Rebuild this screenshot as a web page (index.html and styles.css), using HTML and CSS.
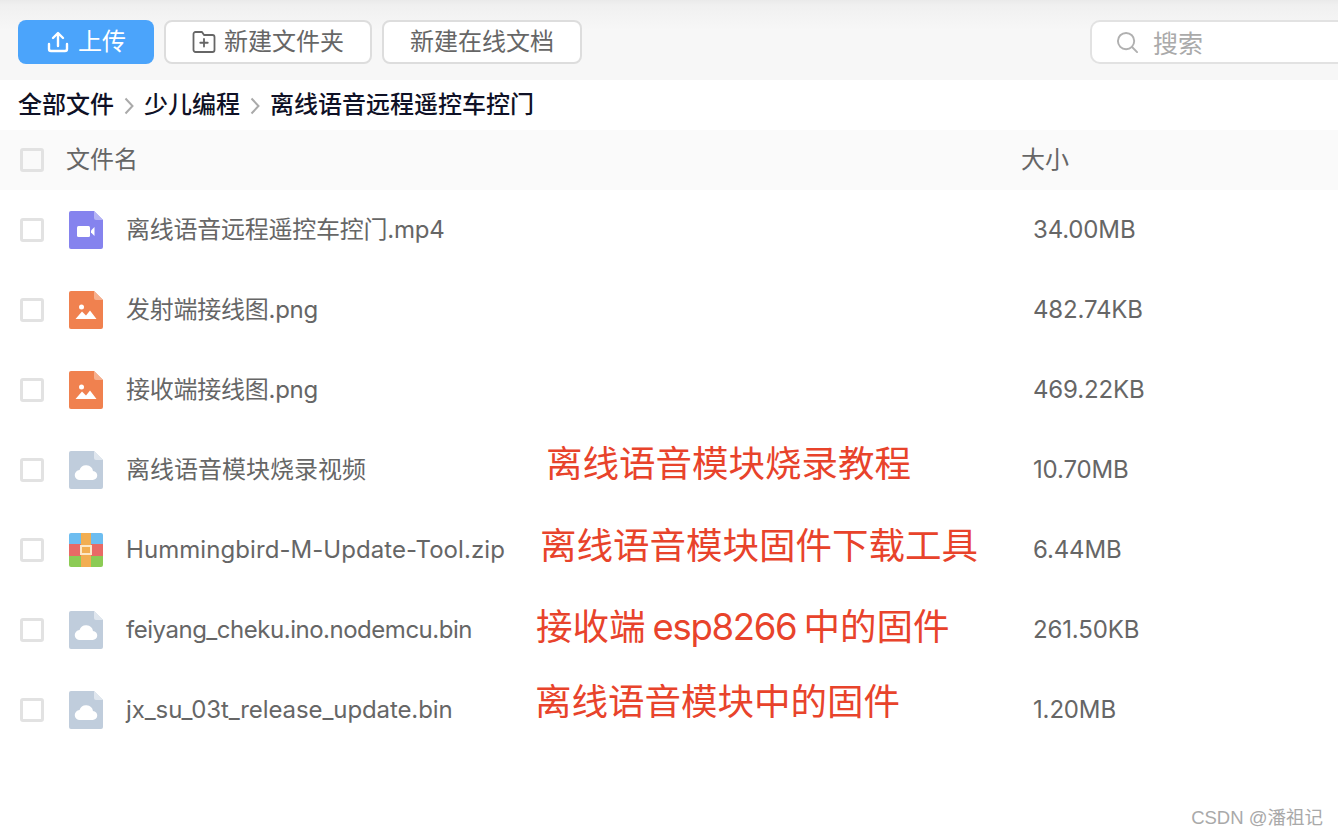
FILE: index.html
```html
<!DOCTYPE html>
<html lang="zh-CN">
<head>
    <meta charset="UTF-8">
    <title>离线语音远程遥控车控门</title>
    <link rel="stylesheet" href="styles.css">
</head>
<body>
    <svg class="sprites" width="0" height="0">
        <symbol id="page-video" viewBox="0 0 34 38">
            <path d="M2 0H25L34 9V36a2 2 0 0 1-2 2H2a2 2 0 0 1-2-2V2a2 2 0 0 1 2-2z" fill="#8583ee"/>
            <path d="M25 0L34 9H27a2 2 0 0 1-2-2z" fill="#b5b4f5"/>
            <rect x="8" y="15" width="13" height="11" rx="1.5" fill="#fff"/>
            <path d="M22 19.500L25.500 16V25L22 21.500z" fill="#fff"/>
        </symbol>
        <symbol id="page-image" viewBox="0 0 34 38">
            <path d="M2 0H25L34 9V36a2 2 0 0 1-2 2H2a2 2 0 0 1-2-2V2a2 2 0 0 1 2-2z" fill="#f0814f"/>
            <path d="M25 0L34 9H27a2 2 0 0 1-2-2z" fill="#f6b08f"/>
            <circle cx="12.500" cy="16" r="2.500" fill="#fff"/>
            <path d="M6.500 28L13 20.500L17 24.500L21 19.500L27.500 28z" fill="#fff"/>
        </symbol>
        <symbol id="page-cloud" viewBox="0 0 34 38">
            <path d="M2 0H25L34 9V36a2 2 0 0 1-2 2H2a2 2 0 0 1-2-2V2a2 2 0 0 1 2-2z" fill="#c0cddc"/>
            <path d="M25 0L34 9H27a2 2 0 0 1-2-2z" fill="#dfe6ee"/>
            <path d="M11 29a5 5 0 0 1-.5-10 7 7 0 0 1 13.500 1 4.500 4.500 0 0 1-.5 9z" fill="#fff"/>
        </symbol>
        <symbol id="zip-box" viewBox="0 0 34 34">
            <path d="M2 0H32a2 2 0 0 1 2 2V11H0V2a2 2 0 0 1 2-2z" fill="#6dbdf0"/>
            <rect y="11" width="34" height="12" fill="#e86a66"/>
            <path d="M0 23H34V32a2 2 0 0 1-2 2H2a2 2 0 0 1-2-2z" fill="#8ccb55"/>
            <rect x="12" width="10" height="34" fill="#f2ae52"/>
            <rect x="12" y="13" width="10" height="8" fill="#f2ae52" stroke="#fbe8c8" stroke-width="2"/>
        </symbol>
    </svg>

    <div class="toolbar">
        <button class="btn btn-primary">
            <svg class="btn-icon" viewBox="0 0 24 24" fill="none" stroke="#fff" stroke-width="2.400" stroke-linecap="round" stroke-linejoin="round">
                <path d="M12 16V3.500M7 8l5-5 5 5M3 14v5a2 2 0 0 0 2 2h14a2 2 0 0 0 2-2v-5"/>
            </svg>
            上传
        </button>
        <button class="btn btn-folder">
            <svg class="btn-icon" viewBox="0 0 24 24" fill="none" stroke="#666" stroke-width="1.800" stroke-linejoin="round" stroke-linecap="round">
                <path d="M1.500 4a2 2 0 0 1 2-2h6.500l2 3h8.500a2 2 0 0 1 2 2v13a2 2 0 0 1-2 2h-17a2 2 0 0 1-2-2zM12 9v7.500M8.250 12.750h7.500"/>
            </svg>
            新建文件夹
        </button>
        <button class="btn btn-doc">新建在线文档</button>
        <div class="search">
            <svg class="search-icon" viewBox="0 0 24 24" fill="none" stroke="#b0b0b0" stroke-width="2" stroke-linecap="round">
                <circle cx="10.500" cy="10.500" r="8.500"/>
                <path d="M17 17l5 5"/>
            </svg>
            <span class="search-text">搜索</span>
        </div>
    </div>

    <div class="crumbs">
        <span>全部文件</span>
        <svg class="crumb-sep" viewBox="0 0 10 18" fill="none" stroke="#aaa" stroke-width="2"><path d="M1.500 1.500L8.500 9L1.500 16.500"/></svg>
        <span>少儿编程</span>
        <svg class="crumb-sep" viewBox="0 0 10 18" fill="none" stroke="#aaa" stroke-width="2"><path d="M1.500 1.500L8.500 9L1.500 16.500"/></svg>
        <span>离线语音远程遥控车控门</span>
    </div>

    <div class="file-head">
        <span class="check"></span>
        <span class="col-name">文件名</span>
        <span class="col-size">大小</span>
    </div>

    <div class="file-row">
        <span class="check"></span>
        <svg class="file-icon"><use href="#page-video"/></svg>
        <span class="file-name">离线语音远程遥控车控门.mp4</span>
        <span class="file-size">34.00MB</span>
    </div>
    <div class="file-row">
        <span class="check"></span>
        <svg class="file-icon"><use href="#page-image"/></svg>
        <span class="file-name">发射端接线图.png</span>
        <span class="file-size">482.74KB</span>
    </div>
    <div class="file-row">
        <span class="check"></span>
        <svg class="file-icon"><use href="#page-image"/></svg>
        <span class="file-name">接收端接线图.png</span>
        <span class="file-size">469.22KB</span>
    </div>
    <div class="file-row">
        <span class="check"></span>
        <svg class="file-icon"><use href="#page-cloud"/></svg>
        <span class="file-name name-plain">离线语音模块烧录视频</span>
        <span class="file-size">10.70MB</span>
    </div>
    <div class="file-row">
        <span class="check"></span>
        <svg class="file-icon"><use href="#zip-box"/></svg>
        <span class="file-name name-wide">Hummingbird-M-Update-Tool.zip</span>
        <span class="file-size">6.44MB</span>
    </div>
    <div class="file-row">
        <span class="check"></span>
        <svg class="file-icon"><use href="#page-cloud"/></svg>
        <span class="file-name name-tight">feiyang_cheku.ino.nodemcu.bin</span>
        <span class="file-size">261.50KB</span>
    </div>
    <div class="file-row">
        <span class="check"></span>
        <svg class="file-icon"><use href="#page-cloud"/></svg>
        <span class="file-name name-slight">jx_su_03t_release_update.bin</span>
        <span class="file-size">1.20MB</span>
    </div>

    <!-- red notes written over the screenshot -->
    <div class="note note-1">离线语音模块烧录教程</div>
    <div class="note note-2">离线语音模块固件下载工具</div>
    <div class="note note-3">接收端<span class="note-latin">esp8266</span>中的固件</div>
    <div class="note note-4">离线语音模块中的固件</div>

    <div class="watermark">CSDN @潘祖记</div>
</body>
</html>
```

FILE: styles.css
```css
* {
    box-sizing: border-box;
}

html,
body {
    height: 100%;
}

body {
    margin: 0;
    position: relative;
    overflow: hidden;
    background-color: #fff;
    color: #666;
    font-family: Inter, "Noto Sans CJK SC", sans-serif;
    font-size: 24px;
    line-height: 30px;
}

.sprites {
    position: absolute;
}

.toolbar {
    height: 80px;
    padding: 20px 0 16px 18px;
    display: flex;
    gap: 10px;
    background: linear-gradient(#eaeaea 0, #f0f0f0 5px, #f7f7f7 30px, #f7f7f7 100%);
}

.btn {
    height: 44px;
    padding: 0;
    display: flex;
    align-items: center;
    justify-content: center;
    background-color: #fff;
    border: 2px solid #ddd;
    border-radius: 8px;
    color: #666;
    font-family: inherit;
    font-size: 24px;
    line-height: 30px;
    flex-shrink: 0;
}

.btn-primary {
    width: 136px;
    background-color: #4ba4fb;
    border: none;
    color: #fff;
}

.btn-folder {
    width: 208px;
}

.btn-doc {
    width: 200px;
}

.btn-icon {
    width: 24px;
    height: 24px;
    margin-right: 8px;
}

.search {
    width: 300px;
    height: 44px;
    margin-left: 498px;
    padding-left: 24px;
    display: flex;
    align-items: center;
    background-color: #fff;
    border: 2px solid #e2e2e2;
    border-right: none;
    border-radius: 10px 0 0 10px;
    color: #aaa;
    font-size: 25px;
    flex-shrink: 0;
}

.search-icon {
    width: 23px;
    height: 23px;
    margin-right: 14px;
}

.search-text {
    margin-top: 3px;
}

.crumbs {
    height: 50px;
    padding-left: 18px;
    display: flex;
    align-items: center;
    color: #0f1126;
    font-weight: 500;
}

.crumb-sep {
    width: 10px;
    height: 18px;
    margin: 2px 10px 0 10px;
}

.file-head {
    height: 60px;
    padding-left: 20px;
    display: flex;
    align-items: center;
    background-color: #fafafa;
}

.check {
    width: 24px;
    height: 24px;
    background-color: #fff;
    border: 3px solid #e2e2e2;
    border-radius: 3px;
    flex-shrink: 0;
}

.file-head .check {
    background-color: transparent;
}

.col-name {
    width: 955px;
    margin-left: 22px;
}

.file-row {
    height: 80px;
    padding-left: 20px;
    display: flex;
    align-items: center;
}

.file-icon {
    width: 34px;
    height: 38px;
    margin-left: 25px;
    flex-shrink: 0;
}

.file-name {
    width: 907px;
    margin-left: 23px;
    letter-spacing: -0.25px;
    flex-shrink: 0;
}

.file-size {
    letter-spacing: -0.15px;
}

.name-plain {
    letter-spacing: 0;
}

.name-wide {
    letter-spacing: 0.07px;
}

.name-slight {
    letter-spacing: -0.1px;
}

.name-tight {
    letter-spacing: -0.48px;
}

.note {
    position: absolute;
    color: #e8432b;
    font-size: 36.500px;
    line-height: 48px;
    white-space: nowrap;
}

.note-latin {
    margin: 0 7px;
    letter-spacing: -1.3px;
}

.note-1 {
    left: 546px;
    top: 440px;
}

.note-2 {
    left: 540px;
    top: 522px;
}

.note-3 {
    left: 536px;
    top: 603px;
}

.note-4 {
    left: 535px;
    top: 678px;
}

.watermark {
    position: absolute;
    right: 15px;
    bottom: 7px;
    color: #a9a9a9;
    font-family: "Liberation Sans", "Noto Sans CJK SC", sans-serif;
    font-size: 18.500px;
    line-height: 22px;
}
```
